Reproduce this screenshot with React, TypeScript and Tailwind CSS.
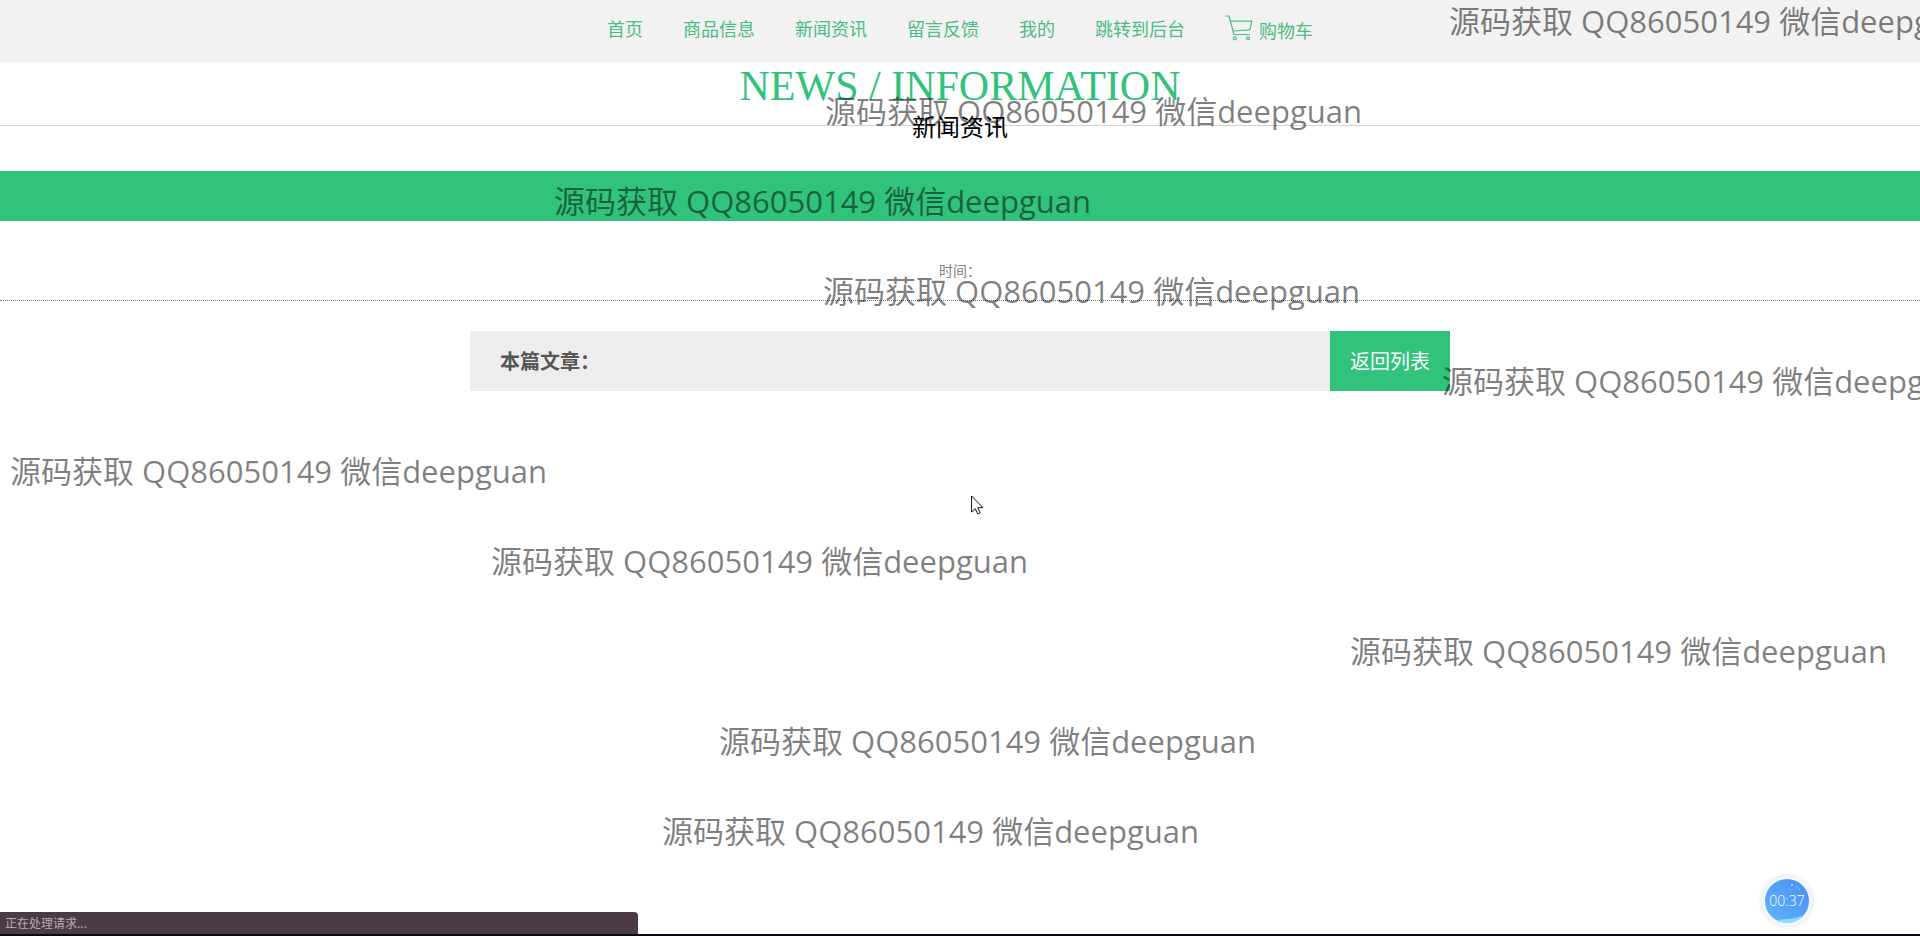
const navItems = ['首页', '商品信息', '新闻资讯', '留言反馈', '我的', '跳转到后台'];

const stamps = [
  { left: 1449, top: 0 },
  { left: 825, top: 90 },
  { left: 554, top: 180 },
  { left: 823, top: 270 },
  { left: 1442, top: 360 },
  { left: 10, top: 450 },
  { left: 491, top: 540 },
  { left: 1350, top: 630 },
  { left: 719, top: 720 },
  { left: 662, top: 810 },
];

function CartIcon() {
  return (
    <svg
      viewBox="0 0 28 26"
      className="h-[26px] w-7"
      fill="none"
      stroke="currentColor"
      strokeWidth="1.2"
      strokeLinejoin="round"
      strokeLinecap="round"
      aria-hidden="true"
    >
      <path d="M0.8 1H4L9 19.5H24.5" />
      <path d="M5.3 6.2H27L24.8 14.8L8 16" />
      <circle cx="9.8" cy="23.3" r="1.5" />
      <circle cx="23" cy="23.3" r="1.5" />
    </svg>
  );
}

function NavBar() {
  return (
    <nav className="flex h-[62px] items-center justify-center gap-10 bg-[#f2f2f2] pb-1.5 text-lg text-[#4cbb84]">
      {navItems.map((item) => (
        <a key={item} href="#">
          {item}
        </a>
      ))}
      <a href="#" className="flex items-center gap-1.5">
        <CartIcon />
        <span className="pt-1">购物车</span>
      </a>
    </nav>
  );
}

function PageTitle() {
  return (
    <header className="text-center">
      <div className="h-16 border-b border-[#d3d3d3]">
        <h1 className="pt-1 font-['Liberation_Serif',serif] text-[42px] leading-10 text-[#31c27c]">
          NEWS / INFORMATION
        </h1>
      </div>
      <p className="-mt-4 h-[61px] text-2xl leading-8 text-black">新闻资讯</p>
    </header>
  );
}

function Watermark() {
  return (
    <div className="pointer-events-none absolute inset-0 overflow-hidden" aria-hidden="true">
      {stamps.map((s) => (
        <span
          key={s.top}
          className="absolute font-['Open_Sans','Noto_Sans_CJK_SC',sans-serif] text-[31px] leading-[42px] whitespace-nowrap text-black/50"
          style={{ left: s.left, top: s.top }}
        >
          源码获取 QQ86050149 微信deepguan
        </span>
      ))}
    </div>
  );
}

export default function App() {
  return (
    <div
      lang="zh-CN"
      className="relative flex min-h-screen flex-col overflow-hidden bg-white font-['Noto_Sans_CJK_SC',sans-serif]"
    >
      <NavBar />
      <PageTitle />
      <main className="flex-1">
        <div className="h-[50px] bg-[#31c27c]" />
        <div className="h-20 border-b border-dotted border-[#777] pt-[39px] text-center text-sm text-[#808080]">
          时间：
        </div>
        <div className="mx-auto mt-[30px] flex h-[60px] max-w-[980px] bg-[#ededed] text-xl">
          <h2 className="flex flex-1 items-center pl-[30px] font-bold text-[#555]">本篇文章：</h2>
          <button type="button" className="w-[120px] bg-[#31c27c] text-white">
            返回列表
          </button>
        </div>
      </main>
      <footer className="border-b-2 border-[#0c0a10]">
        <div className="h-[22px] w-[638px] max-w-full rounded-tr bg-[#4b3b44] pl-[5px] text-xs leading-[22px] text-[#b5adb1]">
          正在处理请求...
        </div>
      </footer>
      <Watermark />
      <div className="absolute right-[108px] bottom-[10px] flex size-[50px] items-center justify-center rounded-full bg-[#eefaff] shadow-[0_0_5px_rgba(0,0,0,0.15)]">
        <div className="relative flex size-11 items-center justify-center overflow-hidden rounded-full bg-linear-to-tr from-[#62b5fb] to-[#4a8df3]">
          <svg viewBox="0 0 44 44" className="absolute inset-0 size-11" aria-hidden="true">
            <path d="M8 44C17 37 23 43 36 37L40 44Z" fill="#8fdcff" />
            <circle cx="27" cy="6" r="1" fill="#a8e2ff" />
            <path d="M31 7L35 11" stroke="#8fcaff" strokeWidth="1" />
          </svg>
          <span className="relative font-['Open_Sans',sans-serif] text-sm font-light text-white">00:37</span>
        </div>
      </div>
      <svg
        viewBox="0 0 13 20"
        className="absolute top-[495px] left-[971px] h-5 w-[13px]"
        fill="white"
        stroke="#111"
        strokeWidth="1"
        aria-hidden="true"
      >
        <path d="M0.6 1V17L4.2 13.6L6.8 19L9.2 17.9L6.8 12.7H12Z" />
      </svg>
    </div>
  );
}
